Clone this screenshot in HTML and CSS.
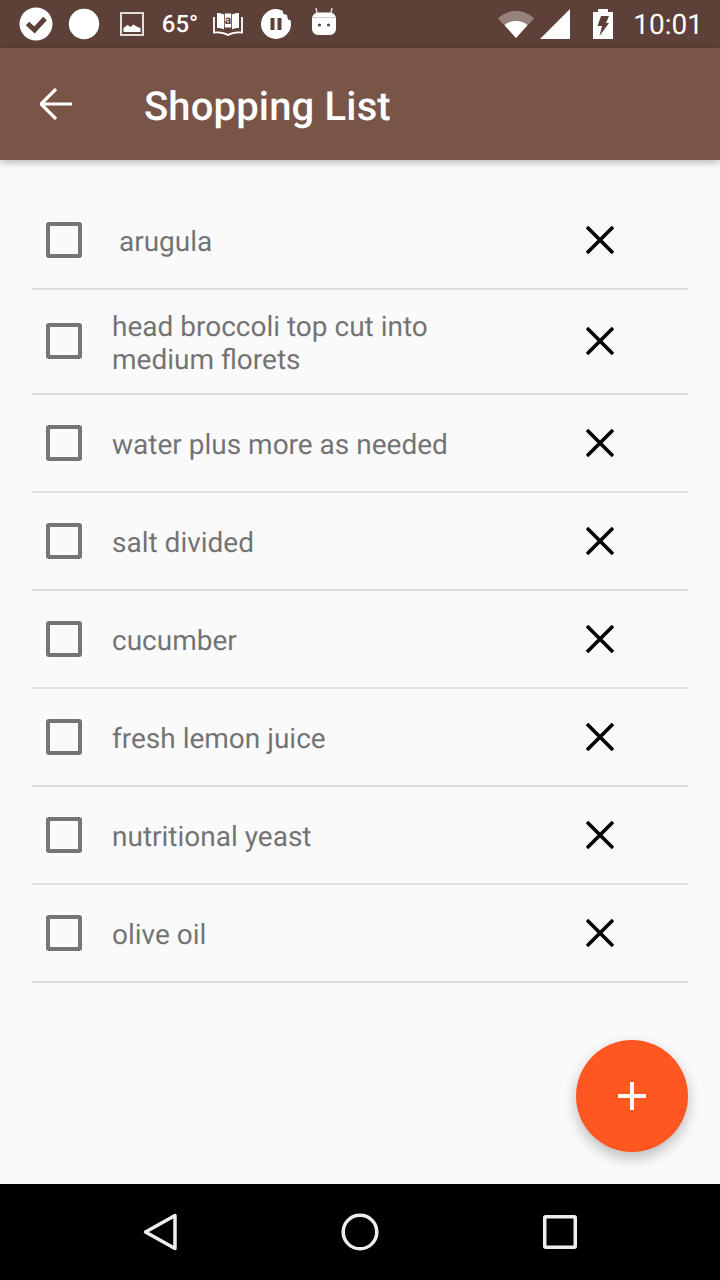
FILE: index.html
```html
<!DOCTYPE html>
<html lang="en">
<head>
    <meta charset="UTF-8">
    <meta name="viewport" content="width=device-width, initial-scale=1.0">
    <title>Shopping List</title>
    <link rel="stylesheet" href="styles.css">
</head>
<body>
    <div class="status-bar">
        <div class="status-left">
            <span class="slot">
                <svg width="34" height="34" viewBox="0 0 34 34"><circle cx="17" cy="17" r="16.5" fill="#fff"/><path d="M8.500 16.500l7 6.500L26 11.500" fill="none" stroke="#5d4037" stroke-width="5"/></svg>
            </span>
            <span class="slot">
                <svg width="32" height="32" viewBox="0 0 32 32"><circle cx="16" cy="16" r="15.2" fill="#fff"/></svg>
            </span>
            <span class="slot">
                <svg width="24" height="24" viewBox="0 0 24 24"><rect x="1" y="1" width="22" height="22" fill="none" stroke="#e4dfdd" stroke-width="2"/><path d="M3.500 20v-4l4-3 3 2 3-2.500 3 2 4 1.500V20z" fill="#fff"/></svg>
            </span>
            <span class="slot temp">65°</span>
            <span class="slot">
                <svg width="30" height="24" viewBox="0 0 30 24"><path d="M4 1c3 0 5 .5 7 1.500v15C9 16.500 7 16 4 16zM26 1c-3 0-5 .5-7 1.500v15c2-1 4-1.500 7-1.500z" fill="#fff"/><rect x="11.800" y="1.500" width="6.400" height="14" fill="#fff"/><text class="book-a" x="15" y="12" text-anchor="middle">a</text><path d="M1 5v15.500c5-.5 10 0 14 2.500 4-2.500 9-3 14-2.500V5" fill="none" stroke="#fff" stroke-width="1.800"/></svg>
            </span>
            <span class="slot">
                <svg width="32" height="32" viewBox="0 0 32 32"><path d="M16 1a15 15 0 1 0 15 15c0-1.500-.2-2.800-.6-4l-2.400-.5-1-4.500-3.500-1-1-3.500-2.500-.5C19 1.300 17.500 1 16 1z" fill="#fff"/><rect x="10.500" y="10" width="4" height="12" fill="#5d4037"/><rect x="17.500" y="10" width="4" height="12" fill="#5d4037"/></svg>
            </span>
            <span class="slot android">
                <svg width="24" height="27" viewBox="0 0 24 27"><path d="M5 5L4 0M19 5l1-5" stroke="#d8d2d0" stroke-width="1.500"/><path d="M6 4.500h12a6 6 0 0 1 6 6V21a6 6 0 0 1-6 6H6a6 6 0 0 1-6-6V10.500a6 6 0 0 1 6-6z" fill="#fff"/><path d="M0 9.500h24" stroke="#cfc8c6" stroke-width="1"/><circle cx="7.500" cy="17" r="1.600" fill="#5d4037"/><circle cx="16.500" cy="17" r="1.600" fill="#5d4037"/></svg>
            </span>
        </div>
        <div class="status-right">
            <svg class="wifi" width="36" height="28" viewBox="0 0 36 28"><path d="M0 8.500C5 3.500 11 1 18 1s13 2.500 18 7.500L18 28z" fill="#fff" fill-opacity=".35"/><path d="M6.500 15C10 12.300 13.500 11 18 11s8 1.300 11.500 4L18 28z" fill="#fff"/></svg>
            <svg class="signal" width="30" height="30" viewBox="0 0 30 30"><path d="M0 30L30 0v30z" fill="#fff"/></svg>
            <svg class="battery" width="20" height="30" viewBox="0 0 20 30"><path d="M5 0h10v3h5v27H0V3h5z" fill="#fff"/><path d="M8 7h8l-3 7h3L6.500 27 9 17H4.500z" fill="#5d4037"/></svg>
            <span class="clock">10:01</span>
        </div>
    </div>

    <header class="app-bar">
        <svg class="back" width="32" height="32" viewBox="0 0 32 32"><path d="M32 16H3M16 1L1 16l15 15" fill="none" stroke="#fff" stroke-width="3.200"/></svg>
        <h1>Shopping List</h1>
    </header>

    <main class="content">
        <ul class="list">
            <li class="item">
                <span class="check"></span>
                <span class="name">&nbsp;arugula</span>
                <svg class="remove" width="28" height="28" viewBox="0 0 28 28"><path d="M1 1l26 26M27 1L1 27"/></svg>
            </li>
            <li class="item item-tall">
                <span class="check"></span>
                <span class="name">head broccoli top cut into medium florets</span>
                <svg class="remove" width="28" height="28" viewBox="0 0 28 28"><path d="M1 1l26 26M27 1L1 27"/></svg>
            </li>
            <li class="item">
                <span class="check"></span>
                <span class="name">water plus more as needed</span>
                <svg class="remove" width="28" height="28" viewBox="0 0 28 28"><path d="M1 1l26 26M27 1L1 27"/></svg>
            </li>
            <li class="item">
                <span class="check"></span>
                <span class="name">salt divided</span>
                <svg class="remove" width="28" height="28" viewBox="0 0 28 28"><path d="M1 1l26 26M27 1L1 27"/></svg>
            </li>
            <li class="item">
                <span class="check"></span>
                <span class="name">cucumber</span>
                <svg class="remove" width="28" height="28" viewBox="0 0 28 28"><path d="M1 1l26 26M27 1L1 27"/></svg>
            </li>
            <li class="item">
                <span class="check"></span>
                <span class="name">fresh lemon juice</span>
                <svg class="remove" width="28" height="28" viewBox="0 0 28 28"><path d="M1 1l26 26M27 1L1 27"/></svg>
            </li>
            <li class="item">
                <span class="check"></span>
                <span class="name">nutritional yeast</span>
                <svg class="remove" width="28" height="28" viewBox="0 0 28 28"><path d="M1 1l26 26M27 1L1 27"/></svg>
            </li>
            <li class="item">
                <span class="check"></span>
                <span class="name">olive oil</span>
                <svg class="remove" width="28" height="28" viewBox="0 0 28 28"><path d="M1 1l26 26M27 1L1 27"/></svg>
            </li>
        </ul>
        <button class="fab" type="button">
            <svg width="28" height="28" viewBox="0 0 28 28"><path d="M14 0v28M0 14h28" stroke="#fff" stroke-width="4"/></svg>
        </button>
    </main>

    <nav class="nav-bar">
        <svg width="34" height="38" viewBox="0 0 34 38"><path d="M32 2.500v33L2.500 19z" fill="none" stroke="#eee" stroke-width="3.500" stroke-linejoin="round"/></svg>
        <svg width="38" height="38" viewBox="0 0 38 38"><circle cx="19" cy="19" r="16.800" fill="none" stroke="#eee" stroke-width="3.500"/></svg>
        <svg width="34" height="34" viewBox="0 0 34 34"><rect x="1.750" y="1.750" width="30.500" height="30.500" rx="1" fill="none" stroke="#eee" stroke-width="3.500"/></svg>
    </nav>
</body>
</html>
```

FILE: styles.css
```css
* {
    box-sizing: border-box;
}
body {
    font-family: Roboto, "Noto Sans", sans-serif;
    text-rendering: geometricPrecision;
    background: #fafafa;
    margin: 0;
    width: 720px;
    height: 1280px;
    display: flex;
    flex-direction: column;
    overflow: hidden;
}
svg {
    display: block;
    flex-shrink: 0;
}

/* status bar */
.status-bar {
    height: 48px;
    flex-shrink: 0;
    background-color: #5d4037;
    color: #fff;
    display: flex;
    align-items: center;
    justify-content: space-between;
    padding: 0 17px 0 12px;
}
.status-left,
.status-right {
    display: flex;
    align-items: center;
}
.slot {
    width: 48px;
    display: flex;
    justify-content: center;
}
.android {
    margin-bottom: 5px;
}
.temp {
    font-size: 24px;
    font-weight: 500;
}
.book-a {
    font-size: 12px;
    font-weight: 700;
    fill: #5d4037;
}
.wifi {
    margin-right: 6px;
}
.signal {
    margin-right: 23px;
}
.battery {
    margin-right: 20px;
}
.clock {
    font-size: 28px;
}

/* app bar */
.app-bar {
    height: 112px;
    flex-shrink: 0;
    background-color: #795548;
    display: flex;
    align-items: center;
    padding-left: 40px;
    box-shadow: 0 2px 8px rgba(0, 0, 0, 0.3);
    position: relative;
}
.back {
    margin-right: 72px;
}
.app-bar h1 {
    color: #fff;
    margin: 0;
    padding-top: 4px;
    font-size: 40px;
    font-weight: 500;
    letter-spacing: 0.15px;
}

/* list */
.content {
    flex: 1;
    position: relative;
    padding: 32px 32px 0;
}
.list {
    list-style: none;
    margin: 0;
    padding: 0;
}
.item {
    height: 98px;
    display: flex;
    align-items: center;
    padding-left: 14px;
    border-bottom: 2px solid #dedede;
}
.item-tall {
    height: 105px;
    padding-bottom: 1px;
}
.item-tall .name {
    padding-top: 4px;
}
.check {
    width: 36px;
    height: 36px;
    flex-shrink: 0;
    border: 4px solid #757575;
    border-radius: 3px;
    margin-right: 30px;
}
.name {
    width: 400px;
    padding-top: 2px;
    font-size: 28px;
    line-height: 33px;
    color: #000;
    opacity: 0.54;
}
.remove {
    margin-left: 74px;
    fill: none;
    stroke: #000;
    stroke-width: 3.600;
}

/* add button */
.fab {
    position: absolute;
    right: 32px;
    bottom: 32px;
    width: 112px;
    height: 112px;
    border: none;
    border-radius: 50%;
    background-color: #ff5722;
    box-shadow: 0 6px 14px rgba(0, 0, 0, 0.25);
    display: flex;
    align-items: center;
    justify-content: center;
    padding: 0;
}

/* nav bar */
.nav-bar {
    height: 96px;
    flex-shrink: 0;
    background-color: #000;
    display: flex;
    align-items: center;
    justify-content: space-between;
    padding: 0 143px;
}
```
